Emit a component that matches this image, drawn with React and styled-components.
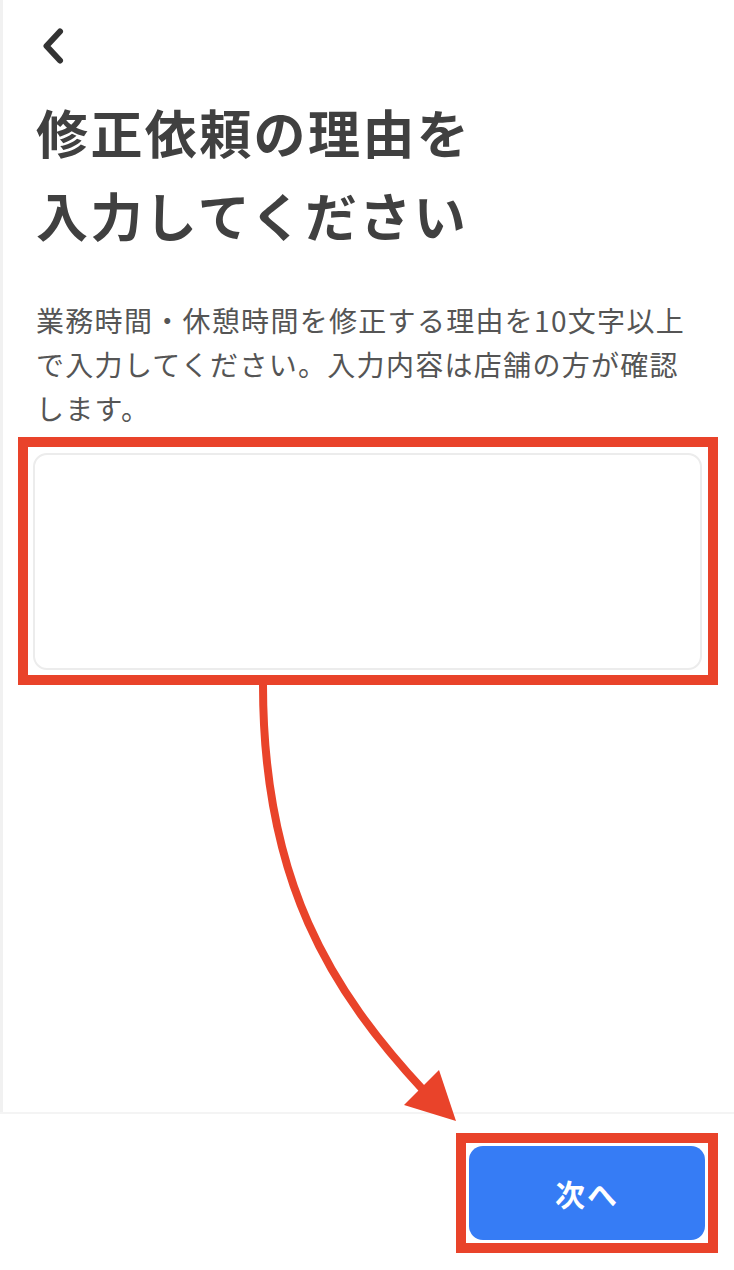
import React, { useState } from 'react';
import styled, { createGlobalStyle } from 'styled-components';

const GlobalStyle = createGlobalStyle`
  * { box-sizing: border-box; }
  html, body {
    margin: 0;
    padding: 0;
    background: #ffffff;
    font-family: "Noto Sans CJK JP", "Noto Sans", sans-serif;
  }
`;

const Page = styled.div`
  position: relative;
  display: flex;
  flex-direction: column;
  min-height: 100vh;
  background: #ffffff;
`;

const Content = styled.div`
  flex: 1;
  display: flex;
  flex-direction: column;
  border-left: 3px solid #f1f1f1;
`;

const Header = styled.div`
  height: 90px;
  padding: 26px 0 0 35px;
`;

const BackButton = styled.button`
  display: block;
  padding: 0;
  border: none;
  background: none;
  cursor: pointer;
`;

const Main = styled.div`
  display: flex;
  flex-direction: column;
  padding: 0 30px 0 33px;
`;

const Title = styled.h1`
  margin: 0;
  font-size: 52px;
  font-weight: 700;
  line-height: 83px;
  letter-spacing: 2.4px;
  color: #404040;
`;

const Description = styled.p`
  margin: 42px 0 0;
  max-width: 665px;
  font-size: 28px;
  font-weight: 400;
  line-height: 44px;
  letter-spacing: 1.3px;
  color: #555555;
`;

const Highlight = styled.div`
  border: 10px solid ${(p) => p.color || '#e9432a'};
  background: #ffffff;
  padding: ${(p) => p.pad || '0'};
`;

const InputFrame = styled(Highlight)`
  margin: 7px -14px 0 -18px;
`;

const ReasonInput = styled.textarea`
  display: block;
  width: 100%;
  height: 217px;
  border: 2px solid #ececec;
  border-radius: 14px;
  resize: none;
  outline: none;
  padding: 14px 16px;
  font-family: inherit;
  font-size: 26px;
  color: #333333;
`;

const Footer = styled.div`
  display: flex;
  justify-content: flex-end;
  padding: 19px 16px 17px;
  border-top: 2px solid #f4f4f4;
  background: #ffffff;
`;

const NextButton = styled.button`
  width: 236px;
  height: 94px;
  border: none;
  border-radius: 14px;
  background: #367cf5;
  color: #ffffff;
  font-family: inherit;
  font-size: 30px;
  font-weight: 700;
  letter-spacing: 2px;
  cursor: pointer;
`;

const Overlay = styled.svg`
  position: absolute;
  top: 0;
  left: 0;
  width: 734px;
  height: 1270px;
  pointer-events: none;
`;

const App = () => {
  const [reason, setReason] = useState('');

  return (
    <>
      <GlobalStyle />
      <Page>
        <Content>
          <Header>
            <BackButton aria-label="戻る">
              <svg width="28" height="40" viewBox="0 0 28 40">
                <path d="M22 5.5 L8.5 20 L22 34.5" fill="none" stroke="#333333" strokeWidth="6" strokeLinecap="round" strokeLinejoin="round" />
              </svg>
            </BackButton>
          </Header>
          <Main>
            <Title>
              修正依頼の理由を
              <br />
              入力してください
            </Title>
            <Description>
              業務時間・休憩時間を修正する理由を10文字以上で入力してください。入力内容は店舗の方が確認します。
            </Description>
            <InputFrame pad="6px 6px 5px 5px">
              <ReasonInput value={reason} onChange={(e) => setReason(e.target.value)} />
            </InputFrame>
          </Main>
        </Content>
        <Footer>
          <Highlight pad="3px">
            <NextButton>次へ</NextButton>
          </Highlight>
        </Footer>
        <Overlay viewBox="0 0 734 1270">
          <path d="M263 685 C 263 880, 330 990, 425 1092" fill="none" stroke="#e9432a" strokeWidth="8" />
          <polygon points="456,1121 404,1105 439,1070" fill="#e9432a" />
        </Overlay>
      </Page>
    </>
  );
};

export default App;
